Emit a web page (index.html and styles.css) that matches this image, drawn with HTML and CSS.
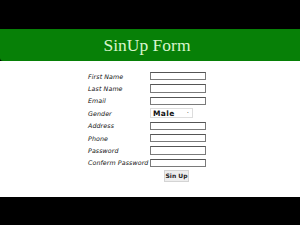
FILE: index.html
```html
<!DOCTYPE html>
<html>
<head>
<meta charset="utf-8">
<link rel="stylesheet" href="styles.css">
</head>
<body>
<div class="top"></div>
<div class="banner"><h1 class="title">SinUp Form</h1></div>
<main class="main">
  <div class="form">
    <label class="lbl">First Name</label><div class="cell"><span class="inp"></span></div>
    <label class="lbl">Last Name</label><div class="cell"><span class="inp"></span></div>
    <label class="lbl">Email</label><div class="cell"><span class="inp"></span></div>
    <label class="lbl">Gender</label><div class="cell"><span class="sel"><b>Male</b><i class="arr">·</i></span></div>
    <label class="lbl">Address</label><div class="cell"><span class="inp"></span></div>
    <label class="lbl">Phone</label><div class="cell"><span class="inp"></span></div>
    <label class="lbl">Password</label><div class="cell"><span class="inp"></span></div>
    <label class="lbl">Conferm Password</label><div class="cell"><span class="inp"></span></div>
    <div class="btnrow"><span class="btn">Sin Up</span></div>
  </div>
</main>
<div class="bottom"></div>
</body>
</html>
```
FILE: styles.css
```css
html, body { margin: 0; padding: 0; background: #000; }
body { width: 300px; height: 225px; overflow: hidden; display: flex; flex-direction: column; }
.top { height: 29px; background: #000; }
.banner { height: 32px; background: #078007; display: flex; align-items: center; justify-content: center; border-bottom-left-radius: 3px; }
.title { margin: 0; padding: 2px 6px 0 0; font-family: "Liberation Serif", serif; font-weight: normal; font-size: 17.5px; color: #d8f5cc; line-height: 1; }
.main { height: 136px; background: #fff; }
.form { display: grid; grid-template-columns: 62px 58px; grid-auto-rows: 12.4px; padding: 9px 0 0 88px; }
.lbl { font-family: "DejaVu Sans", sans-serif; font-style: italic; font-size: 6.3px; color: #111; display: flex; align-items: center; letter-spacing: 0.1px; }
.cell { display: flex; align-items: center; }
.inp { display: block; box-sizing: border-box; width: 56px; height: 8.5px; border: 1px solid #7a7a7a; border-top-color: #555; background: #fff; }
.sel { display: flex; align-items: center; justify-content: space-between; box-sizing: border-box; width: 43px; height: 10px; padding: 0 3px 0 2px; border: 1px solid #ddd; background: #fff; font-family: "DejaVu Sans", sans-serif; font-size: 7.5px; color: #111; }
.sel b { font-weight: bold; letter-spacing: 0.4px; }
.arr { font-style: normal; font-size: 7px; color: #555; }
.btnrow { grid-column: 2; display: flex; align-items: flex-end; padding-left: 14px; }
.btn { display: flex; align-items: center; justify-content: center; width: 23px; height: 10px; background: #eee; border: 1px solid #d4d4d4; font-family: "DejaVu Sans", sans-serif; font-weight: bold; font-size: 6px; color: #222; }
.bottom { flex: 1; background: #000; }
```
